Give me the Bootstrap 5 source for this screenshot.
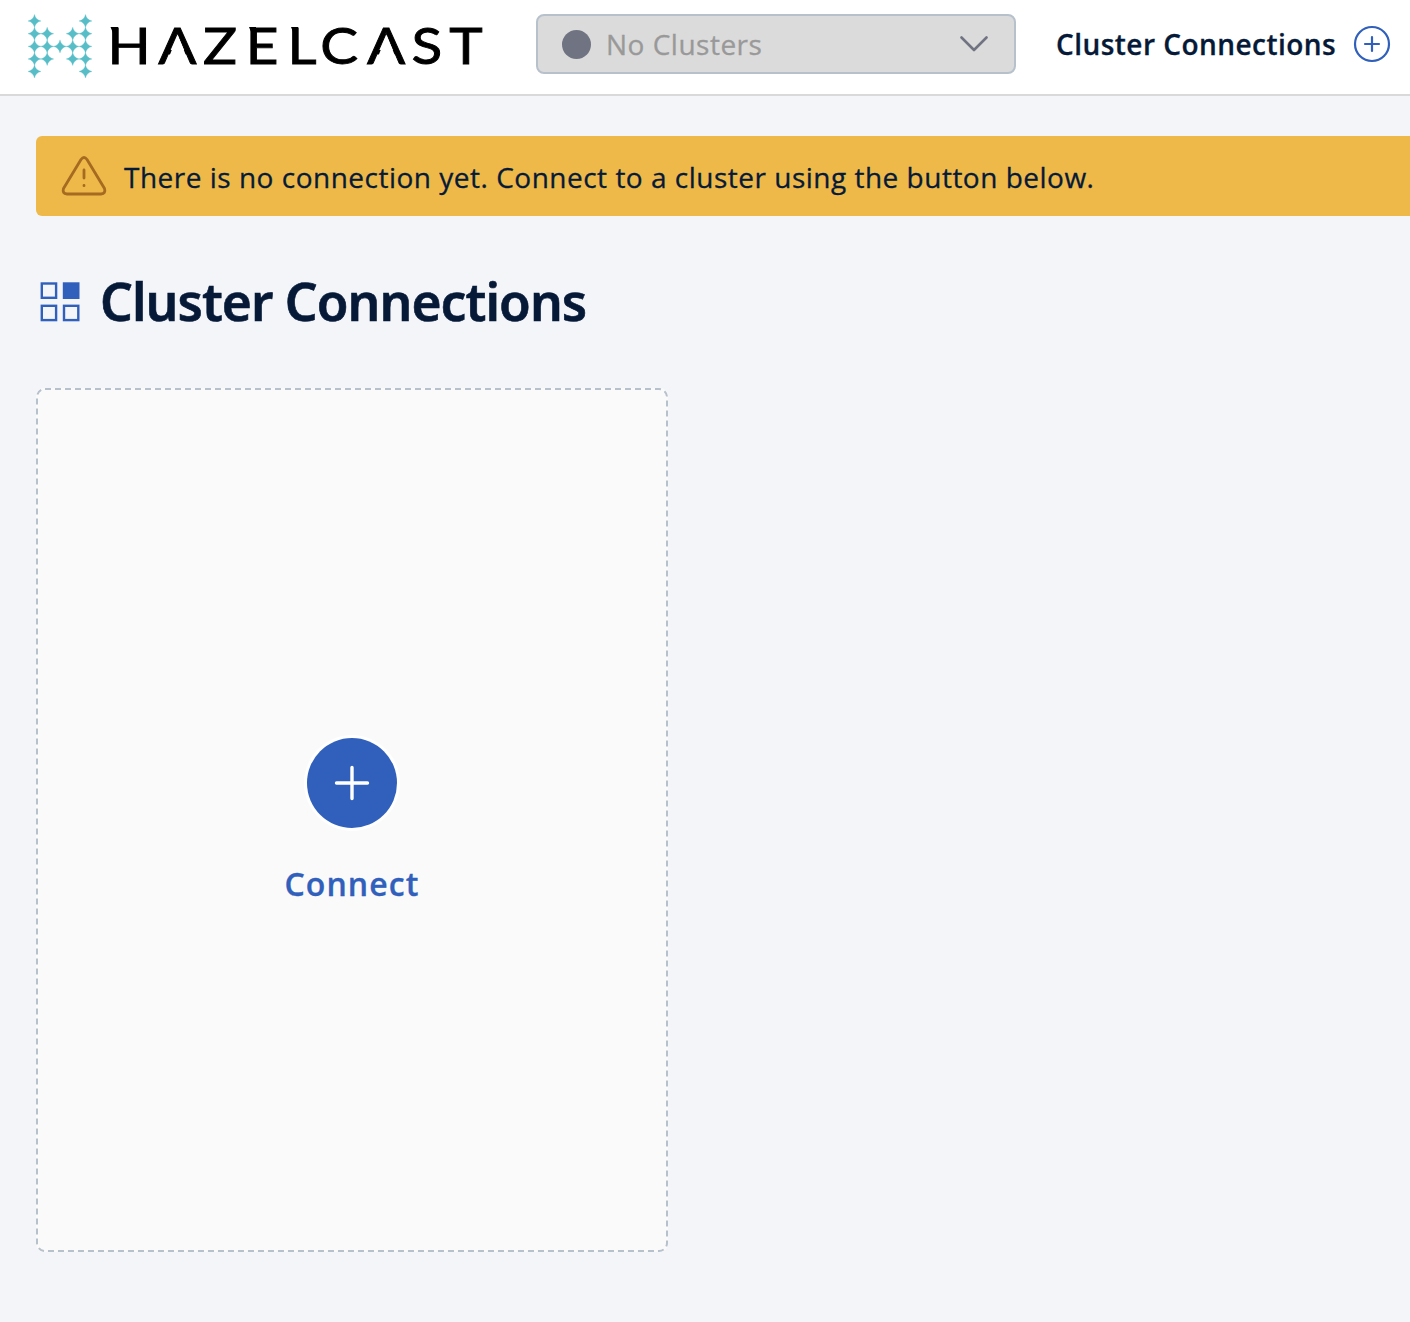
<!DOCTYPE html>
<html lang="en">
<head>
<meta charset="utf-8">
<meta name="viewport" content="width=device-width, initial-scale=1">
<title>Cluster Connections</title>
<link href="https://cdn.jsdelivr.net/npm/bootstrap@5.3.0/dist/css/bootstrap.min.css" rel="stylesheet">
<style>
body{background:#f4f5f9;color:#061a38;font-family:"Open Sans","Noto Sans",sans-serif;min-height:1322px;overflow:hidden}
svg{display:block;flex-shrink:0}
.topbar{height:96px;border-bottom:2px solid #d9d9d9;padding:0 0 6px 20px}
.wordmark{font-family:Lato,sans-serif;font-size:51px}
.cluster-select{flex:0 0 480px;height:60px;margin-left:46px;padding:0 26px 0 23.5px;background:#dbdbdb;border:2px solid #b7c1cc;border-radius:8px;color:#999;font-size:28px;letter-spacing:.5px;-webkit-text-stroke:.3px}
.status-dot{width:29px;height:29px;background:#707482;margin-right:15.5px}
.conn-link{margin-left:40px;font-size:28px;font-weight:600;letter-spacing:.46px;line-height:40px;color:#061a38;white-space:nowrap;-webkit-text-stroke:.3px}
.conn-link svg{margin-left:17px}
.page-body{padding:40px 0 0 36px}
.notice{height:80px;background:#eeb949;color:#061a38;border-radius:6px 0 0 6px;padding:0 24px;font-size:28px;letter-spacing:.5px;-webkit-text-stroke:.3px}
.notice span{padding-top:2px}
.page-title{font-family:"Noto Sans",sans-serif;font-size:51.5px;font-weight:600;line-height:64px;letter-spacing:-.95px;white-space:nowrap;margin-left:19px;-webkit-text-stroke:.6px}
.title-row{margin-top:53px}
.connect-card{width:632px;height:864px;margin-top:55px;background:#fafafa;border-radius:8px}
.connect-btn{color:#3060bb;font-size:32px;font-weight:600;letter-spacing:1.1px;line-height:44px;-webkit-text-stroke:.3px}
.connect-btn span{margin-top:7px}
</style>
<script src="https://cdn.jsdelivr.net/npm/bootstrap@5.3.0/dist/js/bootstrap.bundle.min.js"></script>
</head>
<body>
<header class="topbar bg-white d-flex align-items-center">
  <svg width="470" height="88" viewBox="20 0 470 88" role="img">
    <defs><path id="star" d="M0-6.5C.9-2.800 2.800-.9 6.500 0C2.800.9.9 2.800 0 6.500C-.9 2.800-2.800.9-6.500 0C-2.800-.9-.9-2.800 0-6.500Z" stroke="#57bec8" stroke-width=".3"/></defs>
    <g fill="#57bec8">
      <use href="#star" x="34.5" y="21"/><use href="#star" x="34.5" y="33.7"/><use href="#star" x="34.5" y="46.4"/><use href="#star" x="34.5" y="59"/><use href="#star" x="34.5" y="71.5"/>
      <use href="#star" x="47.2" y="33.7"/><use href="#star" x="47.2" y="46.4"/><use href="#star" x="47.2" y="59"/>
      <use href="#star" x="60" y="46.4"/>
      <use href="#star" x="72.7" y="33.7"/><use href="#star" x="72.7" y="46.4"/><use href="#star" x="72.7" y="59"/>
      <use href="#star" x="85.5" y="21"/><use href="#star" x="85.5" y="33.7"/><use href="#star" x="85.5" y="46.4"/><use href="#star" x="85.5" y="59"/><use href="#star" x="85.5" y="71.5"/>
    </g>
    <text class="wordmark" transform="scale(1.11 1)" y="64.3" x="96.9 142.6 182.8 221.3 259 288.500 330.7 370.800 404.700" stroke="#000" stroke-width=".9">HAZELCAST</text>
    <path d="M177.800 35L190 65.500H165.600ZM386.700 35L398.900 65.500H374.500Z" fill="#fff"/>
    <path d="M110.500 27H118V33H113ZM249 27H256V33H251.500ZM291 27H298V33H293.500Z"/>
  </svg>
  <button class="cluster-select d-flex align-items-center" disabled>
    <span class="status-dot rounded-circle"></span><span>No Clusters</span>
    <svg class="ms-auto" width="28" height="18" viewBox="0 0 28 18" fill="none" stroke="#707482" stroke-width="2.6" stroke-linecap="round" stroke-linejoin="round"><path d="M1.5 2.500L14 15L26.500 2.500"/></svg>
  </button>
  <a href="#" class="conn-link d-flex align-items-center text-decoration-none"><span>Cluster Connections</span>
    <svg width="38" height="38" viewBox="0 0 38 38" fill="none" stroke="#3060bb" stroke-width="2.2"><circle cx="19" cy="19" r="17"/><path d="M19 12V26M12 19H26" stroke-linecap="round"/></svg>
  </a>
</header>
<main class="page-body">
  <div class="notice d-flex align-items-center" role="status">
    <svg width="48" height="44" viewBox="60 154 48 44" fill="none" stroke="#a66a20" stroke-width="2.8" stroke-linecap="round" stroke-linejoin="round"><path d="M81 159.500Q84 155.500 87 159.500L104.500 188.500Q106 193.500 101 194H67Q62 193.500 63.500 188.500ZM84 170V178M84 185.500V185.700"/></svg>
    <span class="ms-3 text-nowrap">There is no connection yet. Connect to a cluster using the button below.</span>
  </div>
  <div class="title-row d-flex align-items-center">
    <svg class="ms-1" width="41" height="41" viewBox="40 281 41 41" fill="none" stroke="#3060bb" stroke-width="2.4"><rect x="41.800" y="283.500" width="14.300" height="14.300"/><rect x="64" y="283.500" width="14.300" height="14.300" fill="#3060bb"/><rect x="41.800" y="305.800" width="14.300" height="14.300"/><rect x="64" y="305.800" width="14.300" height="14.300"/></svg>
    <h1 class="page-title mb-0">Cluster Connections</h1>
  </div>
  <section class="connect-card position-relative d-flex align-items-center justify-content-center">
    <svg class="position-absolute top-0 start-0" width="632" height="864" fill="none" stroke="#b7c1cc" stroke-width="2" stroke-dasharray="6 4"><rect x="1" y="1" width="630" height="862" rx="8"/></svg>
    <button class="connect-btn btn p-0 border-0 d-flex flex-column align-items-center position-relative">
      <svg class="mb-4" width="96" height="96" viewBox="0 0 96 96"><circle cx="48" cy="48" r="48" fill="#fff"/><circle cx="48" cy="48" r="45" fill="#3060bb"/><path d="M48 32.500V63.500M32.500 48H63.500" stroke="#fff" stroke-width="3.400" stroke-linecap="round"/></svg>
      <span>Connect</span>
    </button>
  </section>
</main>
</body>
</html>
